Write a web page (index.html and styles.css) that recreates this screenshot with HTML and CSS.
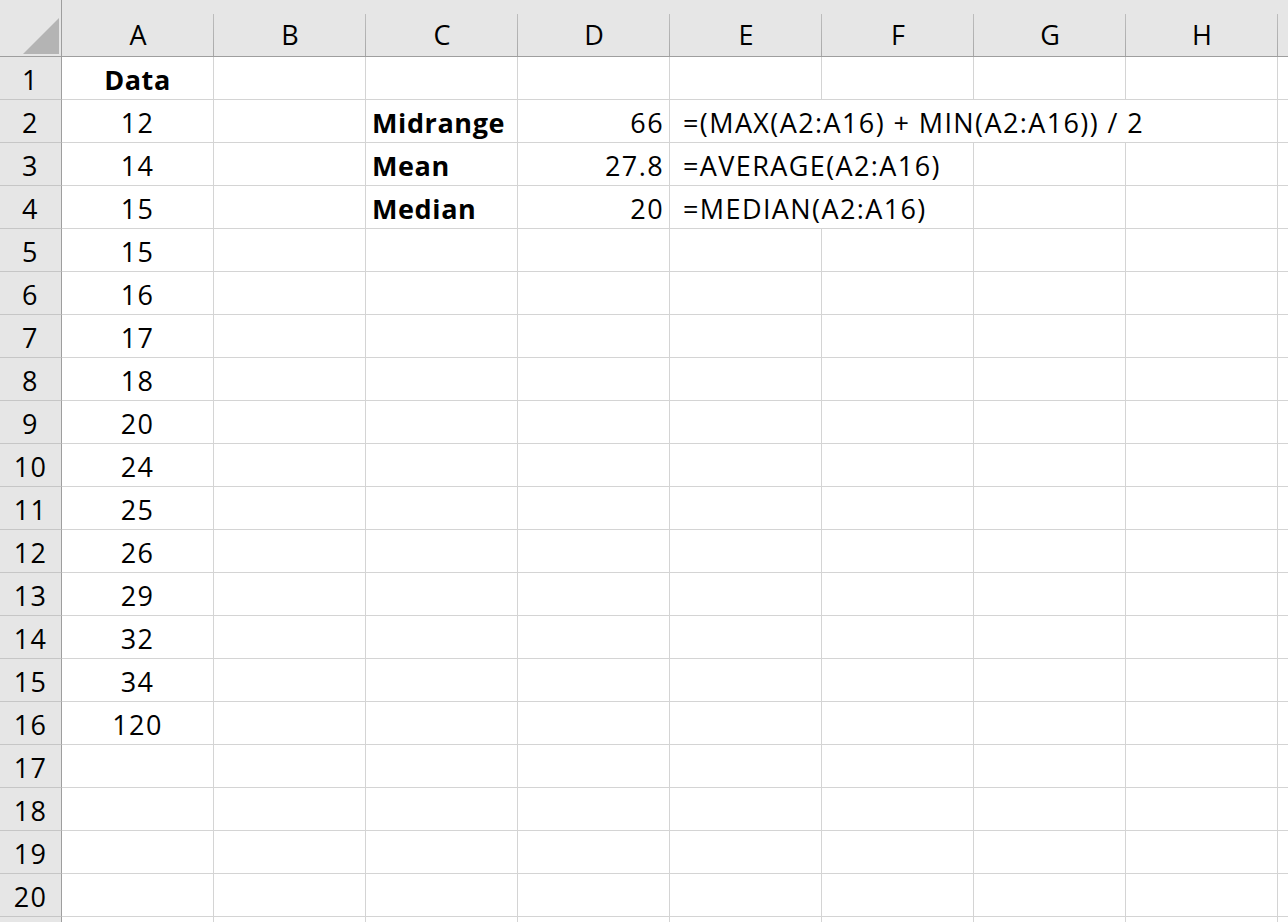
FILE: index.html
```html
<!DOCTYPE html>
<html lang="en">
<head>
    <meta charset="UTF-8">
    <title>Midrange - Sheet1</title>
    <link rel="stylesheet" href="styles.css">
</head>
<body>
    <div class="sheet">
        <!-- column headers -->
        <div class="corner"><div class="tri"></div></div>
        <div class="ch">A</div><div class="ch">B</div><div class="ch">C</div><div class="ch">D</div>
        <div class="ch">E</div><div class="ch">F</div><div class="ch">G</div><div class="ch">H</div>
        <div class="ch last"></div>

        <!-- row 1 -->
        <div class="rh">1</div><div class="c mid bold">Data</div>
        <div class="c"></div><div class="c"></div><div class="c"></div><div class="c"></div><div class="c"></div><div class="c"></div><div class="c"></div><div class="c last"></div>

        <!-- summary rows -->
        <div class="rh">2</div><div class="c mid">12</div><div class="c"></div>
        <div class="c bold">Midrange</div><div class="c num">66</div>
        <div class="c fx span4">=(MAX(A2:A16) + MIN(A2:A16)) / 2</div><div class="c last"></div>

        <div class="rh">3</div><div class="c mid">14</div><div class="c"></div>
        <div class="c bold">Mean</div><div class="c num">27.8</div>
        <div class="c fx span2">=AVERAGE(A2:A16)</div><div class="c"></div><div class="c"></div><div class="c last"></div>

        <div class="rh">4</div><div class="c mid">15</div><div class="c"></div>
        <div class="c bold">Median</div><div class="c num">20</div>
        <div class="c fx span2">=MEDIAN(A2:A16)</div><div class="c"></div><div class="c"></div><div class="c last"></div>

        <!-- data rows -->
        <div class="rh">5</div><div class="c mid">15</div>
        <div class="c"></div><div class="c"></div><div class="c"></div><div class="c"></div><div class="c"></div><div class="c"></div><div class="c"></div><div class="c last"></div>
        <div class="rh">6</div><div class="c mid">16</div>
        <div class="c"></div><div class="c"></div><div class="c"></div><div class="c"></div><div class="c"></div><div class="c"></div><div class="c"></div><div class="c last"></div>
        <div class="rh">7</div><div class="c mid">17</div>
        <div class="c"></div><div class="c"></div><div class="c"></div><div class="c"></div><div class="c"></div><div class="c"></div><div class="c"></div><div class="c last"></div>
        <div class="rh">8</div><div class="c mid">18</div>
        <div class="c"></div><div class="c"></div><div class="c"></div><div class="c"></div><div class="c"></div><div class="c"></div><div class="c"></div><div class="c last"></div>
        <div class="rh">9</div><div class="c mid">20</div>
        <div class="c"></div><div class="c"></div><div class="c"></div><div class="c"></div><div class="c"></div><div class="c"></div><div class="c"></div><div class="c last"></div>
        <div class="rh">10</div><div class="c mid">24</div>
        <div class="c"></div><div class="c"></div><div class="c"></div><div class="c"></div><div class="c"></div><div class="c"></div><div class="c"></div><div class="c last"></div>
        <div class="rh">11</div><div class="c mid">25</div>
        <div class="c"></div><div class="c"></div><div class="c"></div><div class="c"></div><div class="c"></div><div class="c"></div><div class="c"></div><div class="c last"></div>
        <div class="rh">12</div><div class="c mid">26</div>
        <div class="c"></div><div class="c"></div><div class="c"></div><div class="c"></div><div class="c"></div><div class="c"></div><div class="c"></div><div class="c last"></div>
        <div class="rh">13</div><div class="c mid">29</div>
        <div class="c"></div><div class="c"></div><div class="c"></div><div class="c"></div><div class="c"></div><div class="c"></div><div class="c"></div><div class="c last"></div>
        <div class="rh">14</div><div class="c mid">32</div>
        <div class="c"></div><div class="c"></div><div class="c"></div><div class="c"></div><div class="c"></div><div class="c"></div><div class="c"></div><div class="c last"></div>
        <div class="rh">15</div><div class="c mid">34</div>
        <div class="c"></div><div class="c"></div><div class="c"></div><div class="c"></div><div class="c"></div><div class="c"></div><div class="c"></div><div class="c last"></div>
        <div class="rh">16</div><div class="c mid">120</div>
        <div class="c"></div><div class="c"></div><div class="c"></div><div class="c"></div><div class="c"></div><div class="c"></div><div class="c"></div><div class="c last"></div>

        <!-- empty rows -->
        <div class="rh">17</div><div class="c"></div>
        <div class="c"></div><div class="c"></div><div class="c"></div><div class="c"></div><div class="c"></div><div class="c"></div><div class="c"></div><div class="c last"></div>
        <div class="rh">18</div><div class="c"></div>
        <div class="c"></div><div class="c"></div><div class="c"></div><div class="c"></div><div class="c"></div><div class="c"></div><div class="c"></div><div class="c last"></div>
        <div class="rh">19</div><div class="c"></div>
        <div class="c"></div><div class="c"></div><div class="c"></div><div class="c"></div><div class="c"></div><div class="c"></div><div class="c"></div><div class="c last"></div>
        <div class="rh">20</div><div class="c"></div>
        <div class="c"></div><div class="c"></div><div class="c"></div><div class="c"></div><div class="c"></div><div class="c"></div><div class="c"></div><div class="c last"></div>
        <div class="rh"></div><div class="c"></div>
        <div class="c"></div><div class="c"></div><div class="c"></div><div class="c"></div><div class="c"></div><div class="c"></div><div class="c"></div><div class="c last"></div>
    </div>
</body>
</html>
```

FILE: styles.css
```css
body {
    margin: 0;
    background: #ffffff;
    font-family: "Open Sans", Lato, sans-serif;
    font-size: 27px;
    letter-spacing: 1.4px;
    color: #000000;
    overflow: hidden;
}
.sheet {
    display: grid;
    grid-template-columns: 62px repeat(8, 152px) 1fr;
    grid-template-rows: 57px repeat(21, 43px);
    height: 922px;
    overflow: hidden;
}
.sheet > div {
    box-sizing: border-box;
    display: flex;
    align-items: flex-end;
    line-height: 1;
    white-space: nowrap;
}

/* headers */
.corner {
    background: #e6e6e6;
    border-right: 1px solid #9e9e9e;
    border-bottom: 1px solid #9e9e9e;
    justify-content: flex-end;
    padding: 0 2px 2px 0;
}
.corner .tri {
    width: 36px;
    height: 36px;
    background: #b4b4b4;
    clip-path: polygon(100% 0, 100% 100%, 0 100%);
}
.ch {
    background: linear-gradient(#bdbdbd, #a8a8a8) right bottom / 1px 42px no-repeat, #e6e6e6;
    border-bottom: 1px solid #9e9e9e;
    justify-content: center;
    padding-bottom: 8px;
    letter-spacing: 0;
}
.ch.last {
    background: #e6e6e6;
}
.rh {
    background: #e6e6e6;
    border-right: 1px solid #9e9e9e;
    border-bottom: 1px solid #c6c6c6;
    justify-content: center;
    padding-bottom: 6px;
}

/* cells */
.c {
    border-right: 1px solid #d4d4d4;
    border-bottom: 1px solid #d4d4d4;
    padding: 0 6px 6px 6px;
}
.c.last {
    border-right: none;
}
.mid {
    justify-content: center;
}
.num {
    justify-content: flex-end;
    padding-right: 5px;
}
.bold {
    font-weight: bold;
    letter-spacing: 0.6px;
}
.fx {
    padding-left: 13px;
}
.span4 {
    grid-column: span 4;
}
.span2 {
    grid-column: span 2;
}
```
